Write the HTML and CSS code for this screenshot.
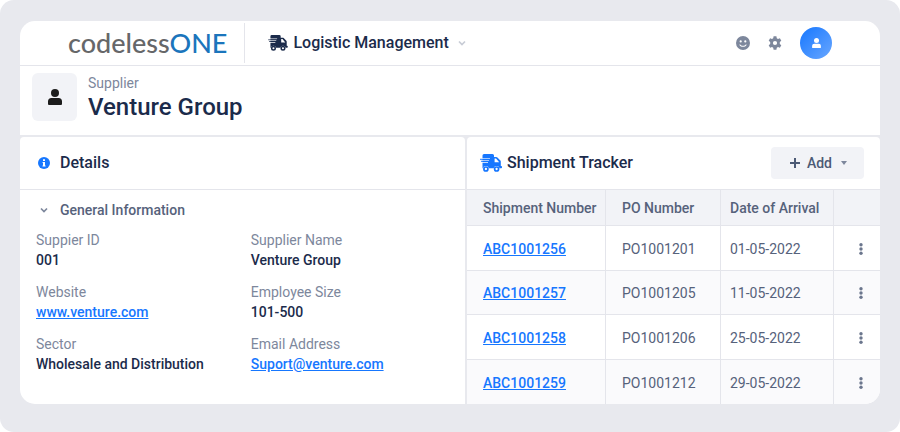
FILE: index.html
```html
<!DOCTYPE html>
<html lang="en">
<head>
    <meta charset="UTF-8">
    <meta name="viewport" content="width=device-width, initial-scale=1.0">
    <title>Venture Group - Logistic Management</title>
    <link rel="stylesheet" href="styles.css">
</head>
<body>
    <svg class="sprite" aria-hidden="true">
        <symbol id="truck" viewBox="0 0 22 18">
            <path fill-rule="evenodd" d="M4 0h8.500a1.500 1.500 0 0 1 1.500 1.500V3h2.200c.5 0 .9.200 1.200.500l3 3.100c.300.300.400.700.400 1.100V12h.4a.8.8 0 0 1 .8.8v.700a.8.8 0 0 1-.8.8H2.500V1.500A1.500 1.500 0 0 1 4 0zM14.600 4.500V8.300h4.600L16 4.500z"/>
            <path d="M0 4h10v.7H0zM0 6h9v.7H0zM0 8h8v.7H0z" fill="#fff"/>
            <path d="M0 4.700h10V6H0zM1 6.700h8V8H1z" opacity=".75"/>
            <circle cx="5.900" cy="15" r="2.900" fill="#fff"/>
            <circle cx="16.600" cy="15" r="2.900" fill="#fff"/>
            <circle cx="5.900" cy="15" r="2" fill="none" stroke="currentColor" stroke-width="1.700"/>
            <circle cx="16.600" cy="15" r="2" fill="none" stroke="currentColor" stroke-width="1.700"/>
        </symbol>
        <symbol id="user" viewBox="0 0 14 16">
            <circle cx="7" cy="4" r="4"/>
            <path d="M3.500 9h7A3.500 3.500 0 0 1 14 12.500V15a1 1 0 0 1-1 1H1a1 1 0 0 1-1-1v-2.500A3.500 3.500 0 0 1 3.500 9z"/>
        </symbol>
        <symbol id="chevron" viewBox="0 0 8 6">
            <path d="M1 1.500l3 3 3-3" fill="none" stroke="currentColor" stroke-width="1.700"/>
        </symbol>
        <symbol id="dots" viewBox="0 0 4 12">
            <circle cx="2" cy="1.800" r="1.700"/>
            <circle cx="2" cy="6" r="1.700"/>
            <circle cx="2" cy="10.200" r="1.700"/>
        </symbol>
    </svg>

    <div class="app">
        <header class="topbar">
            <a class="logo" href="#">codeless<span>ONE</span></a>
            <button class="app-switch">
                <svg class="truck-small"><use href="#truck"/></svg>
                Logistic Management
                <svg class="chevron"><use href="#chevron"/></svg>
            </button>
            <nav class="tools">
                <button class="tool" aria-label="Feedback">
                    <svg viewBox="0 0 14 14"><path fill-rule="evenodd" d="M7 0a7 7 0 1 0 0 14A7 7 0 0 0 7 0zM4.700 4.300a1.100 1.100 0 1 1 0 2.200 1.100 1.100 0 0 1 0-2.200zm4.600 0a1.100 1.100 0 1 1 0 2.200 1.100 1.100 0 0 1 0-2.200zM3.300 8.400h1c.4.9 1.400 1.400 2.700 1.400s2.300-.5 2.700-1.400h1c-.3 1.500-1.800 2.400-3.700 2.400S3.600 9.900 3.300 8.400z"/></svg>
                </button>
                <button class="tool" aria-label="Settings">
                    <svg viewBox="0 0 14 14"><path fill-rule="evenodd" d="M5.600.3h2.800l.4 1.900 1.200.7 1.900-.6 1.400 2.400-1.500 1.300v2l1.500 1.300-1.400 2.400-1.900-.6-1.200.7-.4 1.900H5.600l-.4-1.900-1.200-.7-1.900.6L.7 9.300 2.200 8V6L.7 4.700l1.400-2.400 1.900.6 1.200-.7zM7 4.900a2.100 2.100 0 1 0 0 4.200 2.100 2.100 0 0 0 0-4.200z"/></svg>
                </button>
                <button class="avatar" aria-label="Account">
                    <svg><use href="#user"/></svg>
                </button>
            </nav>
        </header>

        <section class="record">
            <div class="record-icon">
                <svg><use href="#user"/></svg>
            </div>
            <div>
                <p class="record-type">Supplier</p>
                <h1>Venture Group</h1>
            </div>
        </section>

        <main class="panels">
            <section class="panel">
                <div class="panel-head details-head">
                    <svg class="info" viewBox="0 0 12 12"><circle cx="6" cy="6" r="6"/><path d="M5 2.300h2v1.600H5zM4.600 4.900H7v3.500h.6v1H4.500v-1H5V5.900h-.4z" fill="#fff"/></svg>
                    <h2>Details</h2>
                </div>
                <details class="group" open>
                    <summary>
                        <svg class="chevron"><use href="#chevron"/></svg>
                        General Information
                    </summary>
                    <dl class="fields">
                        <div><dt>Suppier ID</dt><dd>001</dd></div>
                        <div><dt>Supplier Name</dt><dd>Venture Group</dd></div>
                        <div><dt>Website</dt><dd><a href="#">www.venture.com</a></dd></div>
                        <div><dt>Employee Size</dt><dd>101-500</dd></div>
                        <div><dt>Sector</dt><dd>Wholesale and Distribution</dd></div>
                        <div><dt>Email Address</dt><dd><a href="#">Suport@venture.com</a></dd></div>
                    </dl>
                </details>
            </section>

            <section class="panel">
                <div class="panel-head tracker-head">
                    <svg class="truck"><use href="#truck"/></svg>
                    <h2>Shipment Tracker</h2>
                    <button class="add">
                        <svg class="plus" viewBox="0 0 12 12"><path d="M6 1v10M1 6h10" stroke="currentColor" stroke-width="2"/></svg>
                        Add
                        <svg class="caret" viewBox="0 0 6 4"><path d="M0 0h6L3 4z"/></svg>
                    </button>
                </div>
                <table class="shipments">
                    <thead>
                        <tr>
                            <th class="col-number">Shipment Number</th>
                            <th class="col-po">PO Number</th>
                            <th class="col-date">Date of Arrival</th>
                            <th class="col-menu"></th>
                        </tr>
                    </thead>
                    <tbody>
                        <tr>
                            <td><a href="#">ABC1001256</a></td>
                            <td>PO1001201</td>
                            <td class="col-date">01-05-2022</td>
                            <td class="col-menu"><button aria-label="Row actions"><svg><use href="#dots"/></svg></button></td>
                        </tr>
                        <tr>
                            <td><a href="#">ABC1001257</a></td>
                            <td>PO1001205</td>
                            <td class="col-date">11-05-2022</td>
                            <td class="col-menu"><button aria-label="Row actions"><svg><use href="#dots"/></svg></button></td>
                        </tr>
                        <tr>
                            <td><a href="#">ABC1001258</a></td>
                            <td>PO1001206</td>
                            <td class="col-date">25-05-2022</td>
                            <td class="col-menu"><button aria-label="Row actions"><svg><use href="#dots"/></svg></button></td>
                        </tr>
                        <tr>
                            <td><a href="#">ABC1001259</a></td>
                            <td>PO1001212</td>
                            <td class="col-date">29-05-2022</td>
                            <td class="col-menu"><button aria-label="Row actions"><svg><use href="#dots"/></svg></button></td>
                        </tr>
                    </tbody>
                </table>
            </section>
        </main>
    </div>
</body>
</html>
```
FILE: styles.css
```css
* {
    box-sizing: border-box;
}
html {
    background: #fff;
}
/* Grey frame round the app */
body {
    margin: 0;
    min-height: 100vh;
    padding: 21px 20px 28px;
    display: flex;
    background: #e8e9ee;
    border-radius: 14px;
    font-family: Roboto, Arial, sans-serif;
    font-size: 14px;
    line-height: 20px;
    color: #1b2b4b;
}
h1, h2, p, dl, dd {
    margin: 0;
}
button {
    border: none;
    padding: 0;
    background: none;
    font: inherit;
    color: inherit;
    cursor: pointer;
}
svg {
    display: block;
    flex-shrink: 0;
    fill: currentColor;
}
a {
    color: #1677ff;
}
.sprite {
    display: none;
}
.app {
    flex: 1;
    display: flex;
    flex-direction: column;
    border-radius: 15px;
    overflow: hidden;
    background: #e8e9ee;
}

/* Top bar */
.topbar {
    display: flex;
    align-items: center;
    height: 45px;
    background: #fff;
    border-bottom: 1px solid #e4e5eb;
}
.logo {
    padding: 0 17px 0 48px;
    border-right: 1px solid #e4e5eb;
    font-family: Lato, sans-serif;
    font-size: 27px;
    font-weight: 500;
    line-height: 40px;
    color: #666769;
    text-decoration: none;
}
.logo span {
    color: #1b75bc;
}
.app-switch {
    display: flex;
    align-items: center;
    gap: 5px;
    margin-left: 23px;
    font-size: 16px;
    font-weight: 500;
}
.truck-small {
    width: 20px;
    height: 16px;
}
.chevron {
    width: 8px;
    height: 6px;
    color: #7d879c;
}
.app-switch .chevron {
    margin-left: 4px;
    color: #c8ccd6;
}
.tools {
    display: flex;
    align-items: center;
    gap: 18px;
    margin-left: auto;
    padding-right: 48px;
    color: #7d879c;
}
.tool svg {
    width: 14px;
    height: 14px;
}
.avatar {
    display: grid;
    place-items: center;
    width: 32px;
    height: 32px;
    border-radius: 50%;
    background: linear-gradient(135deg, #1677ff, #69a7ff);
    color: #fff;
}
.avatar svg {
    width: 9px;
    height: 10px;
}

/* Record title */
.record {
    display: flex;
    align-items: flex-start;
    gap: 11px;
    padding: 7px 12px 14px;
    background: #fff;
}
.record-icon {
    display: grid;
    place-items: center;
    width: 45px;
    height: 48px;
    border-radius: 6px;
    background: #f2f3f7;
    color: #1c1c1c;
}
.record-icon svg {
    width: 14px;
    height: 16px;
}
.record-type {
    color: #7d879c;
}
h1 {
    font-size: 24px;
    line-height: 28px;
    font-weight: 500;
}

/* Panels */
.panels {
    flex: 1;
    display: grid;
    grid-template-columns: 445fr 413fr;
    gap: 2px;
    padding-top: 2px;
}
.panel {
    display: flex;
    flex-direction: column;
    background: #fff;
    border-radius: 4px 4px 0 0;
    overflow: hidden;
}
.panel-head {
    display: flex;
    align-items: center;
    height: 53px;
    border-bottom: 1px solid #e4e5eb;
}
.panel-head h2 {
    font-size: 16px;
    font-weight: 500;
}
.details-head {
    gap: 10px;
    padding: 0 18px;
}
.tracker-head {
    gap: 5px;
    padding: 0 16px 0 13px;
}
.info {
    width: 12px;
    height: 12px;
    color: #1677ff;
}
.truck {
    width: 22px;
    height: 18px;
    color: #1677ff;
}
.add {
    display: flex;
    align-items: center;
    gap: 6px;
    margin-left: auto;
    padding: 0 17px 0 18px;
    height: 32px;
    border-radius: 4px;
    background: #f2f3f7;
    font-weight: 500;
    color: #4c5a75;
}
.plus {
    width: 12px;
    height: 12px;
}
.caret {
    width: 6px;
    height: 4px;
    margin-left: 3px;
    color: #7d879c;
}

/* Details */
.group {
    padding: 10px 16px;
}
.group summary {
    display: flex;
    align-items: center;
    gap: 12px;
    padding-left: 4px;
    font-weight: 500;
    color: #56627b;
    cursor: pointer;
}
.fields {
    display: grid;
    grid-template-columns: 52% 48%;
    row-gap: 12px;
    padding-top: 10px;
}
.fields dt {
    color: #7d879c;
}
.fields dd {
    font-weight: 500;
}

/* Shipments */
.shipments {
    flex: 1;
    width: 100%;
    border-spacing: 0;
    table-layout: fixed;
    color: #56627b;
}
.shipments th,
.shipments td {
    padding: 0 0 0 16px;
    border-right: 1px solid #e4e5eb;
    border-bottom: 1px solid #e4e5eb;
    text-align: left;
}
.shipments th {
    height: 36px;
    background: #f2f3f7;
    font-weight: 500;
}
.shipments td {
    height: 44px;
    padding-top: 2px;
}
.shipments tr > :last-child {
    border-right: none;
}
.shipments tr:last-child td {
    border-bottom: none;
}
.shipments tr:nth-child(even) td {
    background: #fafafc;
}
.shipments a {
    font-weight: 500;
}
.col-number {
    width: 139px;
}
.col-po {
    width: 115px;
}
.shipments .col-date {
    width: 113px;
    padding-left: 9px;
}
.shipments .col-menu {
    padding-left: 25px;
}
.col-menu button {
    display: block;
    color: #6b768d;
}
.col-menu svg {
    width: 4px;
    height: 12px;
}
```
